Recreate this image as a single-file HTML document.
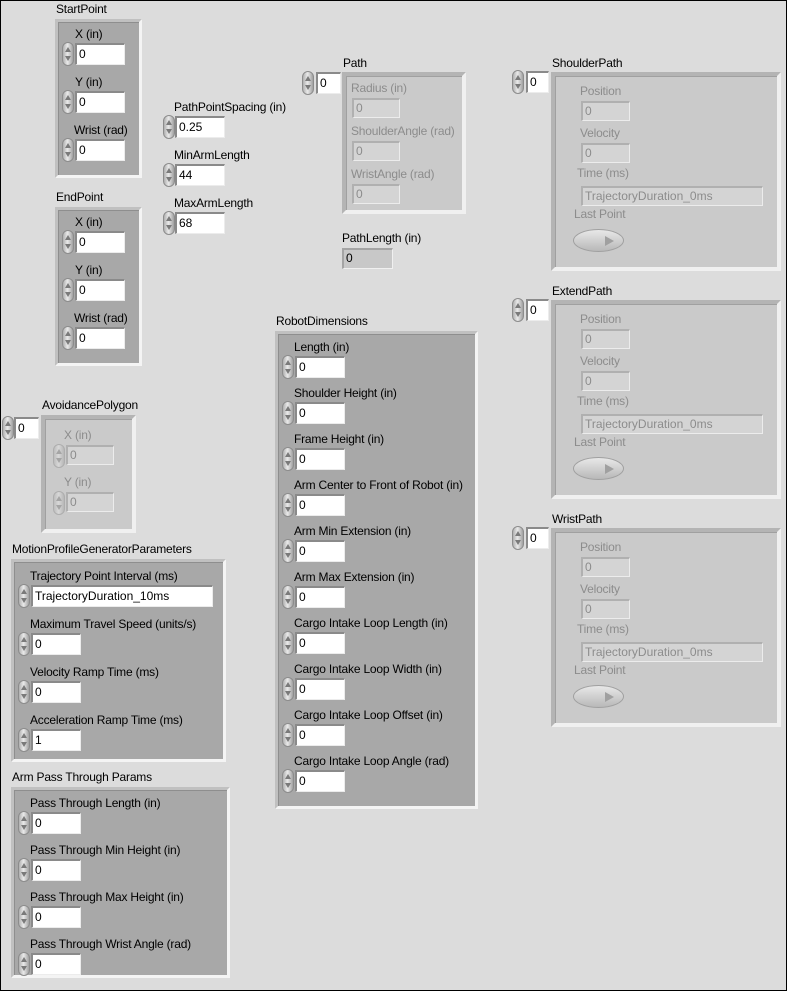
<!DOCTYPE html>
<html><head><meta charset="utf-8"><style>
*{margin:0;padding:0;box-sizing:border-box}
body{width:787px;height:991px;background:#dcdcdc;position:relative;overflow:hidden;font-family:"Liberation Sans",sans-serif;font-size:12px;color:#000}
#frame{position:absolute;left:0;top:0;width:787px;height:991px;border:1px solid #000;z-index:10;pointer-events:none}
.l{position:absolute;white-space:nowrap;line-height:14px;letter-spacing:-0.2px}
.d{color:#8c8c8c}
.c{position:absolute;background:#a8a8a8;border:3px solid;border-color:#c0c0c0 #f4f4f4 #f4f4f4 #c0c0c0;box-shadow:inset 1px 1px 0 #8e8e8e}
.cd{position:absolute;background:#cacaca;border:4px solid;border-color:#b4b4b4 #f0f0f0 #f0f0f0 #b4b4b4;box-shadow:inset 1px 1px 0 #a0a0a0}
.b{position:absolute;background:#fff;border-top:2px solid #8a8a8a;border-left:2px solid #8a8a8a;border-right:1px solid #ececec;border-bottom:1px solid #ececec;height:22px;line-height:18px;padding-left:2px;font-size:12px}
.bd{position:absolute;background:#d4d4d4;border-top:2px solid #b0b0b0;border-left:2px solid #b0b0b0;border-right:1px solid #ececec;border-bottom:1px solid #ececec;height:20px;line-height:16px;padding-left:2px;color:#8c8c8c}
.s{position:absolute;width:12px;height:24px;border-radius:6px;background:linear-gradient(90deg,#b0b0b0,#eaeaea 45%,#a0a0a0);border:1px solid #8c8c8c}
.s:before{content:"";position:absolute;left:2px;top:4px;border-left:3px solid transparent;border-right:3px solid transparent;border-bottom:5px solid #7a7a7a}
.s:after{content:"";position:absolute;left:2px;top:13px;border-left:3px solid transparent;border-right:3px solid transparent;border-top:5px solid #7a7a7a}
.sd{opacity:.45}
.btn{position:absolute;width:51px;height:23px;border-radius:50%;background:linear-gradient(#e8e8e8,#b8b8b8);border:1px solid #a0a0a0}
.btn:after{content:"";position:absolute;left:31px;top:6px;border-top:5px solid transparent;border-bottom:5px solid transparent;border-left:9px solid #a0a0a0}
</style></head><body>
<div id="frame"></div>

<!-- StartPoint -->
<div class="l" style="left:56px;top:2px">StartPoint</div>
<div class="c" style="left:55px;top:19px;width:87px;height:159px"></div>
<div class="l" style="left:75px;top:27px">X (in)</div><div class="s" style="left:62px;top:42px"></div><div class="b" style="left:75px;top:43px;width:50px">0</div>
<div class="l" style="left:75px;top:75px">Y (in)</div><div class="s" style="left:62px;top:90px"></div><div class="b" style="left:75px;top:91px;width:50px">0</div>
<div class="l" style="left:74px;top:123px">Wrist (rad)</div><div class="s" style="left:62px;top:138px"></div><div class="b" style="left:75px;top:139px;width:50px">0</div>

<!-- EndPoint -->
<div class="l" style="left:56px;top:190px">EndPoint</div>
<div class="c" style="left:55px;top:207px;width:87px;height:159px"></div>
<div class="l" style="left:75px;top:215px">X (in)</div><div class="s" style="left:62px;top:230px"></div><div class="b" style="left:75px;top:231px;width:50px">0</div>
<div class="l" style="left:75px;top:263px">Y (in)</div><div class="s" style="left:62px;top:278px"></div><div class="b" style="left:75px;top:279px;width:50px">0</div>
<div class="l" style="left:74px;top:311px">Wrist (rad)</div><div class="s" style="left:62px;top:326px"></div><div class="b" style="left:75px;top:327px;width:50px">0</div>

<!-- Spacing -->
<div class="l" style="left:174px;top:100px">PathPointSpacing (in)</div><div class="s" style="left:163px;top:115px"></div><div class="b" style="left:175px;top:116px;width:50px">0.25</div>
<div class="l" style="left:174px;top:148px">MinArmLength</div><div class="s" style="left:163px;top:163px"></div><div class="b" style="left:175px;top:164px;width:50px">44</div>
<div class="l" style="left:174px;top:196px">MaxArmLength</div><div class="s" style="left:163px;top:211px"></div><div class="b" style="left:175px;top:212px;width:50px">68</div>

<!-- Path -->
<div class="l" style="left:343px;top:56px">Path</div>
<div class="s" style="left:302px;top:71px"></div><div class="b" style="left:316px;top:72px;width:25px">0</div>
<div class="cd" style="left:342px;top:72px;width:124px;height:142px"></div>
<div class="l d" style="left:351px;top:81px">Radius (in)</div><div class="bd" style="left:352px;top:98px;width:48px">0</div>
<div class="l d" style="left:351px;top:124px">ShoulderAngle (rad)</div><div class="bd" style="left:352px;top:141px;width:48px">0</div>
<div class="l d" style="left:351px;top:167px">WristAngle (rad)</div><div class="bd" style="left:352px;top:184px;width:48px">0</div>

<div class="l" style="left:342px;top:231px">PathLength (in)</div>
<div class="bd" style="left:342px;top:248px;width:51px;height:21px;background:#c8c8c8;color:#000;border-color:#a4a4a4 #f0f0f0 #f0f0f0 #a4a4a4">0</div>

<!-- ShoulderPath -->
<div class="l" style="left:552px;top:56px">ShoulderPath</div>
<div class="s" style="left:512px;top:70px"></div><div class="b" style="left:526px;top:71px;width:23px">0</div>
<div class="cd" style="left:551px;top:72px;width:230px;height:199px"></div>
<div class="l d" style="left:580px;top:84px">Position</div><div class="bd" style="left:581px;top:101px;width:49px">0</div>
<div class="l d" style="left:580px;top:126px">Velocity</div><div class="bd" style="left:581px;top:143px;width:49px">0</div>
<div class="l d" style="left:577px;top:166px">Time (ms)</div><div class="bd" style="left:581px;top:186px;width:182px">TrajectoryDuration_0ms</div>
<div class="l d" style="left:574px;top:207px">Last Point</div><div class="btn" style="left:573px;top:229px"></div>

<!-- ExtendPath -->
<div class="l" style="left:552px;top:284px">ExtendPath</div>
<div class="s" style="left:512px;top:298px"></div><div class="b" style="left:526px;top:299px;width:23px">0</div>
<div class="cd" style="left:551px;top:300px;width:230px;height:199px"></div>
<div class="l d" style="left:580px;top:312px">Position</div><div class="bd" style="left:581px;top:329px;width:49px">0</div>
<div class="l d" style="left:580px;top:354px">Velocity</div><div class="bd" style="left:581px;top:371px;width:49px">0</div>
<div class="l d" style="left:577px;top:394px">Time (ms)</div><div class="bd" style="left:581px;top:414px;width:182px">TrajectoryDuration_0ms</div>
<div class="l d" style="left:574px;top:435px">Last Point</div><div class="btn" style="left:573px;top:457px"></div>

<!-- WristPath -->
<div class="l" style="left:552px;top:512px">WristPath</div>
<div class="s" style="left:512px;top:526px"></div><div class="b" style="left:526px;top:527px;width:23px">0</div>
<div class="cd" style="left:551px;top:528px;width:230px;height:199px"></div>
<div class="l d" style="left:580px;top:540px">Position</div><div class="bd" style="left:581px;top:557px;width:49px">0</div>
<div class="l d" style="left:580px;top:582px">Velocity</div><div class="bd" style="left:581px;top:599px;width:49px">0</div>
<div class="l d" style="left:577px;top:622px">Time (ms)</div><div class="bd" style="left:581px;top:642px;width:182px">TrajectoryDuration_0ms</div>
<div class="l d" style="left:574px;top:663px">Last Point</div><div class="btn" style="left:573px;top:685px"></div>

<!-- AvoidancePolygon -->
<div class="l" style="left:42px;top:398px">AvoidancePolygon</div>
<div class="s" style="left:2px;top:416px"></div><div class="b" style="left:14px;top:417px;width:25px">0</div>
<div class="cd" style="left:41px;top:415px;width:95px;height:118px"></div>
<div class="l d" style="left:64px;top:428px">X (in)</div><div class="s sd" style="left:53px;top:444px"></div><div class="bd" style="left:66px;top:445px;width:48px">0</div>
<div class="l d" style="left:64px;top:475px">Y (in)</div><div class="s sd" style="left:53px;top:491px"></div><div class="bd" style="left:66px;top:492px;width:48px">0</div>

<!-- Motion -->
<div class="l" style="left:12px;top:542px">MotionProfileGeneratorParameters</div>
<div class="c" style="left:11px;top:559px;width:215px;height:203px"></div>
<div class="l" style="left:30px;top:569px">Trajectory Point Interval (ms)</div><div class="s" style="left:18px;top:584px"></div><div class="b" style="left:31px;top:585px;width:182px">TrajectoryDuration_10ms</div>
<div class="l" style="left:30px;top:617px">Maximum Travel Speed (units/s)</div><div class="s" style="left:18px;top:632px"></div><div class="b" style="left:31px;top:633px;width:50px">0</div>
<div class="l" style="left:30px;top:665px">Velocity Ramp Time (ms)</div><div class="s" style="left:18px;top:680px"></div><div class="b" style="left:31px;top:681px;width:50px">0</div>
<div class="l" style="left:30px;top:713px">Acceleration Ramp Time (ms)</div><div class="s" style="left:18px;top:728px"></div><div class="b" style="left:31px;top:729px;width:50px">1</div>

<!-- Arm Pass -->
<div class="l" style="left:12px;top:770px">Arm Pass Through Params</div>
<div class="c" style="left:11px;top:787px;width:219px;height:191px"></div>
<div class="l" style="left:30px;top:796px">Pass Through Length (in)</div><div class="s" style="left:18px;top:811px"></div><div class="b" style="left:31px;top:812px;width:50px">0</div>
<div class="l" style="left:30px;top:843px">Pass Through Min Height (in)</div><div class="s" style="left:18px;top:858px"></div><div class="b" style="left:31px;top:859px;width:50px">0</div>
<div class="l" style="left:30px;top:890px">Pass Through Max Height (in)</div><div class="s" style="left:18px;top:905px"></div><div class="b" style="left:31px;top:906px;width:50px">0</div>
<div class="l" style="left:30px;top:937px">Pass Through Wrist Angle (rad)</div><div class="s" style="left:18px;top:952px"></div><div class="b" style="left:31px;top:953px;width:50px">0</div>

<!-- RobotDimensions -->
<div class="l" style="left:276px;top:314px">RobotDimensions</div>
<div class="c" style="left:275px;top:331px;width:203px;height:478px"></div>
<div class="l" style="left:294px;top:340px">Length (in)</div><div class="s" style="left:282px;top:355px"></div><div class="b" style="left:295px;top:356px;width:50px">0</div>
<div class="l" style="left:294px;top:386px">Shoulder Height (in)</div><div class="s" style="left:282px;top:401px"></div><div class="b" style="left:295px;top:402px;width:50px">0</div>
<div class="l" style="left:294px;top:432px">Frame Height (in)</div><div class="s" style="left:282px;top:447px"></div><div class="b" style="left:295px;top:448px;width:50px">0</div>
<div class="l" style="left:294px;top:478px">Arm Center to Front of Robot (in)</div><div class="s" style="left:282px;top:493px"></div><div class="b" style="left:295px;top:494px;width:50px">0</div>
<div class="l" style="left:294px;top:524px">Arm Min Extension (in)</div><div class="s" style="left:282px;top:539px"></div><div class="b" style="left:295px;top:540px;width:50px">0</div>
<div class="l" style="left:294px;top:570px">Arm Max Extension (in)</div><div class="s" style="left:282px;top:585px"></div><div class="b" style="left:295px;top:586px;width:50px">0</div>
<div class="l" style="left:294px;top:616px">Cargo Intake Loop Length (in)</div><div class="s" style="left:282px;top:631px"></div><div class="b" style="left:295px;top:632px;width:50px">0</div>
<div class="l" style="left:294px;top:662px">Cargo Intake Loop Width (in)</div><div class="s" style="left:282px;top:677px"></div><div class="b" style="left:295px;top:678px;width:50px">0</div>
<div class="l" style="left:294px;top:708px">Cargo Intake Loop Offset (in)</div><div class="s" style="left:282px;top:723px"></div><div class="b" style="left:295px;top:724px;width:50px">0</div>
<div class="l" style="left:294px;top:754px">Cargo Intake Loop Angle (rad)</div><div class="s" style="left:282px;top:769px"></div><div class="b" style="left:295px;top:770px;width:50px">0</div>
</body></html>
